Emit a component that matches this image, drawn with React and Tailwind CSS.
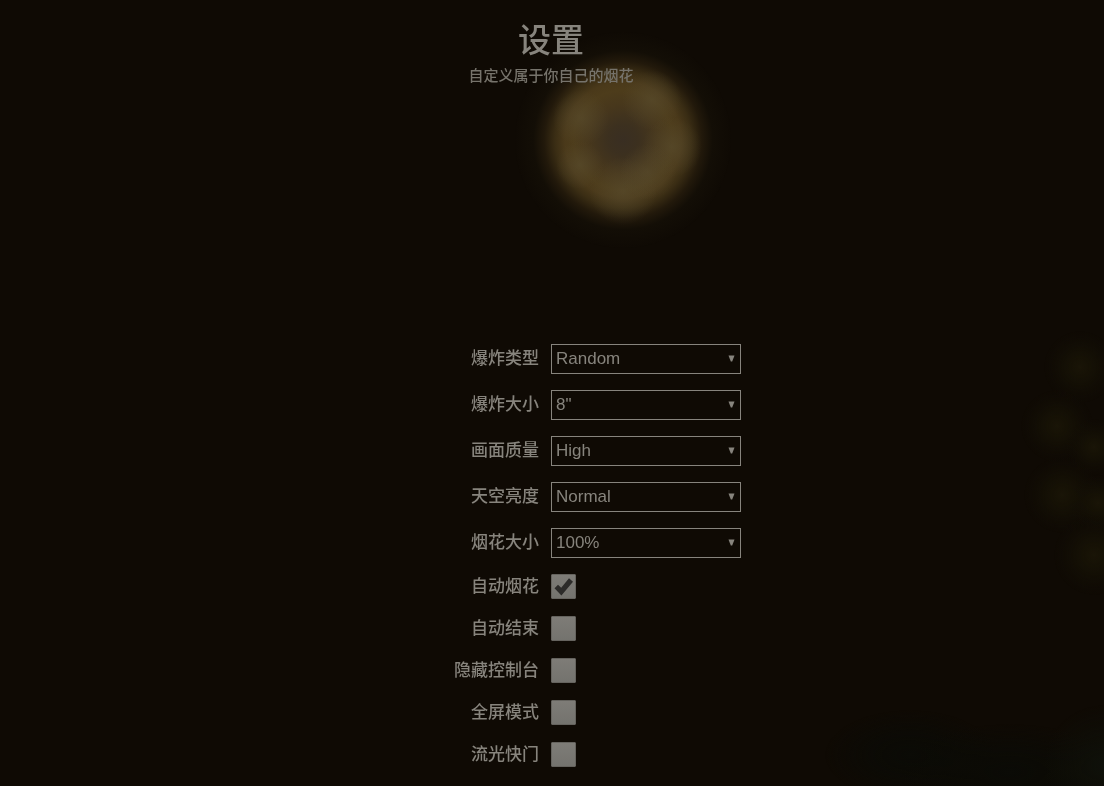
import { useState } from "react";

const selects = [
  { id: "shell", label: "爆炸类型", value: "Random", options: ["Random", "Crackle", "Crysanthemum", "Ghost", "Ring"] },
  { id: "size", label: "爆炸大小", value: '8"', options: ['3"', '4"', '6"', '8"', '12"', '16"'] },
  { id: "quality", label: "画面质量", value: "High", options: ["Low", "Normal", "High"] },
  { id: "sky", label: "天空亮度", value: "Normal", options: ["None", "Dim", "Normal"] },
  { id: "scale", label: "烟花大小", value: "100%", options: ["50%", "62%", "75%", "90%", "100%", "150%", "200%"] },
];

const toggles = [
  { id: "auto", label: "自动烟花", value: true },
  { id: "finale", label: "自动结束", value: false },
  { id: "hide", label: "隐藏控制台", value: false },
  { id: "fullscreen", label: "全屏模式", value: false },
  { id: "shutter", label: "流光快门", value: false },
];

function initialConfig() {
  const config = {};
  for (const field of [...selects, ...toggles]) config[field.id] = field.value;
  return config;
}

export default function App() {
  const [config, setConfig] = useState(initialConfig);

  function update(id, value) {
    setConfig((c) => ({ ...c, [id]: value }));
  }

  return (
    <div className="relative isolate min-h-screen bg-[#0f0a04] font-['Liberation_Sans','Noto_Sans_CJK_SC',sans-serif] font-medium text-[#87847d]">
      <Sky />

      <main className="flex min-h-screen flex-col pt-5 pr-0.5 pb-[18px]">
        <header className="text-center">
          <h1 className="text-[33px] leading-[42px] font-medium">设置</h1>
          <p className="mt-0.5 text-[15px] leading-6 text-[#76736b]">自定义属于你自己的烟花</p>
        </header>

        <form className="mt-auto flex flex-col gap-4 pt-8 text-[17px]" onSubmit={(e) => e.preventDefault()}>
          {selects.map((s) => (
            <Row key={s.id} id={s.id} label={s.label}>
              <div className="relative w-[190px]">
                <select
                  id={s.id}
                  className="block h-[30px] w-full appearance-none border border-[#87847d] bg-transparent pr-6 pl-1 outline-none"
                  value={config[s.id]}
                  onChange={(e) => update(s.id, e.target.value)}
                >
                  {s.options.map((o) => (
                    <option key={o} className="bg-[#0f0a04]">{o}</option>
                  ))}
                </select>
                <svg viewBox="0 0 7 7" className="pointer-events-none absolute top-[11px] right-[6px] size-[7px]" aria-hidden="true">
                  <path d="M.5 .5h6L4.2 6.5H2.8z" fill="currentColor" />
                </svg>
              </div>
            </Row>
          ))}

          {toggles.map((t) => (
            <Row key={t.id} id={t.id} label={t.label}>
              <div className="relative h-[26px] w-[25px]">
                <input
                  id={t.id}
                  type="checkbox"
                  className="peer block size-[25px] appearance-none rounded-[1px] border border-[#65635e] bg-linear-to-b from-[#7e7c77] to-[#74736e] outline-none"
                  checked={config[t.id]}
                  onChange={(e) => update(t.id, e.target.checked)}
                />
                <svg viewBox="0 0 25 25" className="pointer-events-none absolute top-0 left-0 hidden size-[25px] peer-checked:block" aria-hidden="true">
                  <path d="M3.5 14.2 7 10.7l3.2 3L18 4.2l4 3.6L10.4 21.4z" fill="#2c2b29" />
                </svg>
              </div>
            </Row>
          ))}
        </form>
      </main>
    </div>
  );
}

function Row({ id, label, children }) {
  return (
    <div className="grid grid-cols-2 items-center">
      <label htmlFor={id} className="pr-3 text-right leading-[26px]">{label}</label>
      {children}
    </div>
  );
}

const sparks = [
  [1080, 367, 36],
  [1057, 426, 36],
  [1094, 447, 28],
  [1062, 495, 38],
  [1098, 503, 28],
  [1094, 555, 40],
];

// Out-of-focus fireworks behind the menu
function Sky() {
  return (
    <svg
      viewBox="0 0 1104 786"
      preserveAspectRatio="xMidYMid slice"
      className="pointer-events-none fixed inset-0 -z-10 h-full w-full"
      aria-hidden="true"
    >
      <defs>
        <radialGradient id="burst">
          <stop offset="0" stopColor="#392e22" />
          <stop offset="0.14" stopColor="#3c301f" />
          <stop offset="0.32" stopColor="#47371c" />
          <stop offset="0.46" stopColor="#4d3c1b" />
          <stop offset="0.54" stopColor="#4a391a" />
          <stop offset="0.63" stopColor="#3a2d14" />
          <stop offset="0.73" stopColor="#22190b" />
          <stop offset="0.83" stopColor="#130e06" />
          <stop offset="1" stopColor="#0f0a04" />
        </radialGradient>
        <radialGradient id="glow">
          <stop offset="0" stopColor="#5c5032" stopOpacity="0.5" />
          <stop offset="0.5" stopColor="#5c5032" stopOpacity="0.25" />
          <stop offset="1" stopColor="#5c5032" stopOpacity="0" />
        </radialGradient>
        <radialGradient id="spark">
          <stop offset="0" stopColor="#1a1507" />
          <stop offset="0.4" stopColor="#171306" stopOpacity="0.7" />
          <stop offset="1" stopColor="#130f06" stopOpacity="0" />
        </radialGradient>
        <radialGradient id="haze">
          <stop offset="0" stopColor="#0b0b06" />
          <stop offset="0.5" stopColor="#0b0b06" stopOpacity="0.7" />
          <stop offset="1" stopColor="#0b0b06" stopOpacity="0" />
        </radialGradient>
        <radialGradient id="edge">
          <stop offset="0" stopColor="#0f110a" />
          <stop offset="1" stopColor="#0f110a" stopOpacity="0" />
        </radialGradient>
      </defs>

      <circle cx="623" cy="140" r="108" fill="url(#burst)" />
      <g fill="url(#glow)">
        <circle cx="581" cy="118" r="28" />
        <circle cx="580" cy="165" r="24" />
        <circle cx="652" cy="100" r="30" />
        <circle cx="672" cy="147" r="30" />
        <circle cx="623" cy="191" r="34" />
        <circle cx="648" cy="172" r="28" />
      </g>

      <g fill="url(#spark)">
        {sparks.map(([x, y, r]) => (
          <circle key={y} cx={x} cy={y} r={r} />
        ))}
      </g>

      <g fill="url(#haze)">
        <ellipse cx="910" cy="755" rx="85" ry="45" />
        <ellipse cx="1010" cy="772" rx="110" ry="48" />
      </g>
      <ellipse cx="1104" cy="765" rx="60" ry="60" fill="url(#edge)" />
    </svg>
  );
}
